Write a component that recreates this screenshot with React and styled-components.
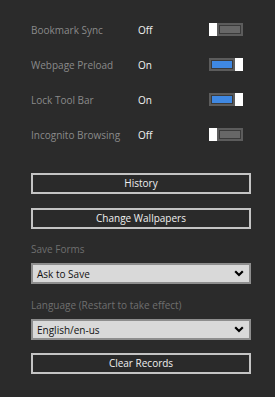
import React from "react";
import styled, { createGlobalStyle } from "styled-components";

const Global = createGlobalStyle`
  html, body { margin: 0; padding: 0; background: #2b2b2b; }
  body { font-family: "Segoe UI", "Open Sans", sans-serif; }
`;

const Page = styled.div`
  width: 275px;
  height: 397px;
  box-sizing: border-box;
  padding: 12px 24px 0 31px;
  background: #2b2b2b;
  display: flex;
  flex-direction: column;
`;

const Row = styled.div`
  display: grid;
  grid-template-columns: 107px 71px 34px;
  align-items: center;
  height: 35px;
`;

const Label = styled.span`
  color: #8a8a8a;
  font-size: 10px;
  white-space: nowrap;
`;

const Value = styled.span`
  color: #f2f2f2;
  font-size: 10px;
`;

const Toggle = styled.div`
  display: flex;
  flex-direction: ${(p) => (p.$on ? "row-reverse" : "row")};
  width: 34px;
  height: 13px;
`;

const Thumb = styled.div`
  width: 8px;
  background: #ffffff;
`;

const Fill = styled.div`
  flex: 1;
  box-sizing: border-box;
  border: 2px solid #5c5c5c;
  box-shadow: inset 0 0 0 1px #3a3a3a;
  background: ${(p) => (p.$on ? "#3f88e2" : "#676767")};
`;

const Button = styled.button`
  box-sizing: border-box;
  width: 220px;
  height: 21px;
  margin-top: ${(p) => p.$mt}px;
  padding: 0;
  border: 2px solid #c4c4c4;
  background: #2a2a2a;
  color: #f0f0f0;
  font-family: inherit;
  font-size: 10px;
  line-height: 17px;
  text-align: center;
`;

const SectionLabel = styled.div`
  color: #6f6f6f;
  font-size: 10px;
  margin-top: ${(p) => p.$mt}px;
  height: 16px;
  line-height: 16px;
`;

const Select = styled.div`
  box-sizing: border-box;
  width: 220px;
  height: 21px;
  margin-top: ${(p) => p.$mt}px;
  border: 2px solid #8e8e8e;
  background: #d9d9d9;
  display: flex;
  align-items: center;
  justify-content: space-between;
  padding: 0 5px 0 4px;
  color: #111;
  font-size: 10px;
`;

const Chevron = () => (
  <svg width="10" height="7" viewBox="0 0 10 7">
    <path d="M1.2 1.3 L5 5 L8.8 1.3" fill="none" stroke="#000" strokeWidth="2.2" />
  </svg>
);

const settings = [
  { label: "Bookmark Sync", on: false },
  { label: "Webpage Preload", on: true },
  { label: "Lock Tool Bar", on: true },
  { label: "Incognito Browsing", on: false },
];

export default function App() {
  return (
    <>
      <Global />
      <Page>
        {settings.map((s) => (
          <Row key={s.label}>
            <Label>{s.label}</Label>
            <Value>{s.on ? "On" : "Off"}</Value>
            <Toggle $on={s.on}>
              <Thumb />
              <Fill $on={s.on} />
            </Toggle>
          </Row>
        ))}
        <Button $mt={21}>History</Button>
        <Button $mt={14}>Change Wallpapers</Button>
        <SectionLabel $mt={12}>Save Forms</SectionLabel>
        <Select $mt={6}>
          <span>Ask to Save</span>
          <Chevron />
        </Select>
        <SectionLabel $mt={13}>Language (Restart to take effect)</SectionLabel>
        <Select $mt={6}>
          <span>English/en-us</span>
          <Chevron />
        </Select>
        <Button $mt={13}>Clear Records</Button>
      </Page>
    </>
  );
}
